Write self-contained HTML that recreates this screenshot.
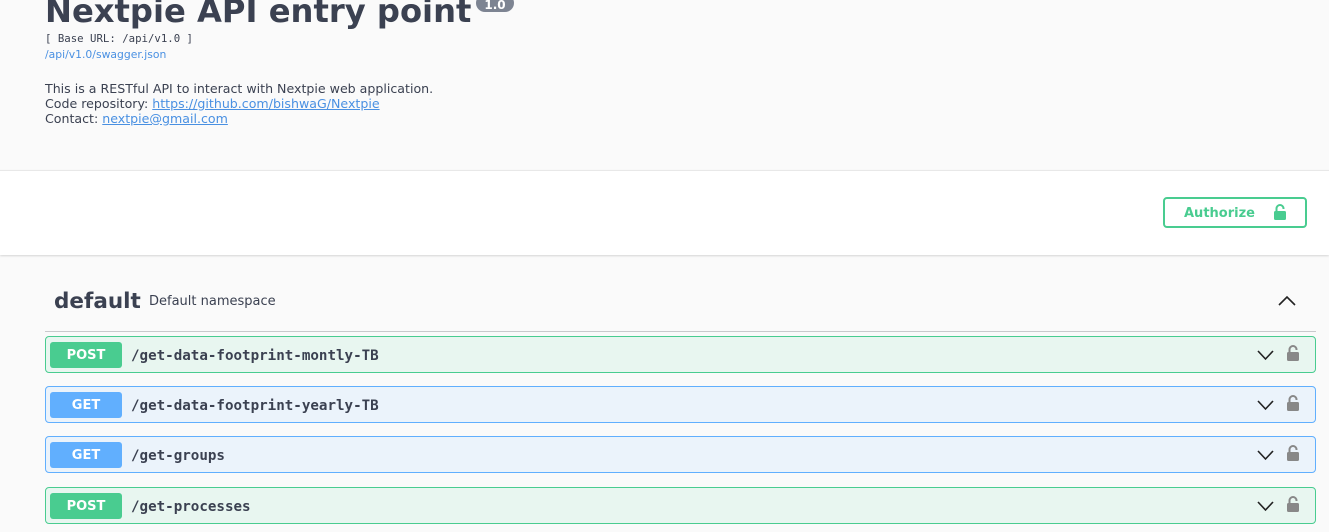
<!DOCTYPE html>
<html><head><style>
*{box-sizing:border-box;margin:0;padding:0}
body{width:1329px;height:532px;overflow:hidden;background:#fafafa;font-family:"DejaVu Sans","Liberation Sans",sans-serif;color:#3b4151;position:relative}
.abs{position:absolute}
h1{position:absolute;left:45px;top:-9px;font-size:32.2px;font-weight:bold;color:#3b4151;white-space:nowrap;line-height:40px}
.ver{position:absolute;left:476px;top:-6px;width:38px;height:18px;background:#7d8492;border-radius:9px;color:#fff;font-size:12px;font-weight:bold;text-align:center;line-height:22px}
.base{left:45px;top:32px;font-family:"DejaVu Sans Mono",monospace;font-size:10.7px;color:#3b4151}
.sj{left:45px;top:48px;font-size:10.8px;color:#4990e2}
.desc{left:45px;top:81px;font-size:12.6px;line-height:15px;color:#3b4151}
.desc a{color:#4990e2;text-decoration:underline}
.band{left:0;top:170px;width:1329px;height:85px;background:#fff;border-top:1px solid #e8e8e8;box-shadow:0 1px 2px rgba(0,0,0,.15)}
.auth{left:1163px;top:197px;width:144px;height:31px;border:2px solid #49cc90;border-radius:4px;color:#49cc90;font-weight:bold;font-size:13px;line-height:29px;padding-left:19px}
.def{left:54px;top:289px;font-size:21.5px;font-weight:bold}
.ns{left:149px;top:294px;font-size:13px}
.line{left:45px;top:331px;width:1271px;height:1px;background:#c8c9cc}
.op{position:absolute;left:45px;width:1271px;height:37px;border-radius:4px;border:1px solid}
.post{background:#e8f6f0;border-color:#49cc90}
.get{background:#ebf3fb;border-color:#61affe}
.m{position:absolute;left:4px;top:5px;width:72px;height:26px;border-radius:3px;color:#fff;font-weight:bold;font-size:13px;text-align:center;line-height:28px}
.post .m{background:#49cc90}.get .m{background:#61affe}
.p{position:absolute;left:85px;top:11px;font-family:"DejaVu Sans Mono",monospace;font-weight:bold;font-size:14.2px;color:#3b4151}
.ch{position:absolute;left:1211px;top:13px}
.lk{position:absolute;left:1240px;top:8px}
</style></head><body>
<h1>Nextpie API entry point</h1>
<div class="ver">1.0</div>
<div class="abs base">[ Base URL: /api/v1.0 ]</div>
<div class="abs sj">/api/v1.0/swagger.json</div>
<div class="abs desc">This is a RESTful API to interact with Nextpie web application.<br>Code repository: <a>https://github.com/bishwaG/Nextpie</a><br>Contact: <a>nextpie@gmail.com</a></div>
<div class="abs band"></div>
<div class="abs auth">Authorize
<svg class="abs" style="left:108px;top:5px" width="14" height="17" viewBox="0 0 14 17"><path d="M3.5 8V4.5a3.5 3.5 0 0 1 7 0V5" fill="none" stroke="#49cc90" stroke-width="2"/><rect x="1" y="7" width="12" height="9" rx="1.5" fill="#49cc90"/></svg></div>
<div class="abs def">default</div>
<div class="abs ns">Default namespace</div>
<svg class="abs" style="left:1278px;top:295px" width="18" height="11"><path d="M1 10L9 2l8 8" fill="none" stroke="#222" stroke-width="1.6"/></svg>
<div class="abs line"></div>

<div class="op post" style="top:336px"><div class="m">POST</div><div class="p">/get-data-footprint-montly-TB</div>
<svg class="ch" width="17" height="11"><path d="M1 1l7.5 8L16 1" fill="none" stroke="#222" stroke-width="1.6"/></svg>
<svg class="lk" width="14" height="17" viewBox="0 0 14 17"><path d="M3.5 8V4.5a3.5 3.5 0 0 1 7 0V5" fill="none" stroke="#888" stroke-width="2"/><rect x="1" y="7" width="12" height="9" rx="1.5" fill="#888"/></svg></div>
<div class="op get" style="top:386px"><div class="m">GET</div><div class="p">/get-data-footprint-yearly-TB</div>
<svg class="ch" width="17" height="11"><path d="M1 1l7.5 8L16 1" fill="none" stroke="#222" stroke-width="1.6"/></svg>
<svg class="lk" width="14" height="17" viewBox="0 0 14 17"><path d="M3.5 8V4.5a3.5 3.5 0 0 1 7 0V5" fill="none" stroke="#888" stroke-width="2"/><rect x="1" y="7" width="12" height="9" rx="1.5" fill="#888"/></svg></div>
<div class="op get" style="top:436px"><div class="m">GET</div><div class="p">/get-groups</div>
<svg class="ch" width="17" height="11"><path d="M1 1l7.5 8L16 1" fill="none" stroke="#222" stroke-width="1.6"/></svg>
<svg class="lk" width="14" height="17" viewBox="0 0 14 17"><path d="M3.5 8V4.5a3.5 3.5 0 0 1 7 0V5" fill="none" stroke="#888" stroke-width="2"/><rect x="1" y="7" width="12" height="9" rx="1.5" fill="#888"/></svg></div>
<div class="op post" style="top:487px"><div class="m">POST</div><div class="p">/get-processes</div>
<svg class="ch" width="17" height="11"><path d="M1 1l7.5 8L16 1" fill="none" stroke="#222" stroke-width="1.6"/></svg>
<svg class="lk" width="14" height="17" viewBox="0 0 14 17"><path d="M3.5 8V4.5a3.5 3.5 0 0 1 7 0V5" fill="none" stroke="#888" stroke-width="2"/><rect x="1" y="7" width="12" height="9" rx="1.5" fill="#888"/></svg></div>
</body></html>
